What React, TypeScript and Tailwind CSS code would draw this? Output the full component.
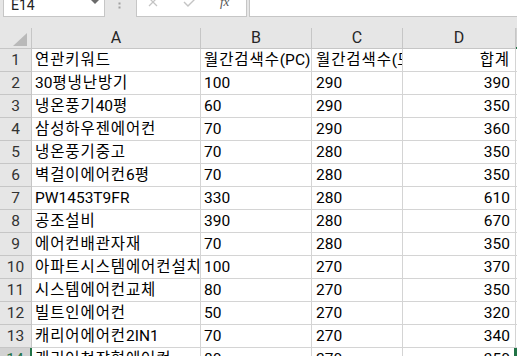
import React from "react";

const rows: [string, string, string, string, string][] = [
  ["1", "연관키워드", "월간검색수(PC)", "월간검색수(모바일)", "합계"],
  ["2", "30평냉난방기", "100", "290", "390"],
  ["3", "냉온풍기40평", "60", "290", "350"],
  ["4", "삼성하우젠에어컨", "70", "290", "360"],
  ["5", "냉온풍기중고", "70", "280", "350"],
  ["6", "벽걸이에어컨6평", "70", "280", "350"],
  ["7", "PW1453T9FR", "330", "280", "610"],
  ["8", "공조설비", "390", "280", "670"],
  ["9", "에어컨배관자재", "70", "280", "350"],
  ["10", "아파트시스템에어컨설치", "100", "270", "370"],
  ["11", "시스템에어컨교체", "80", "270", "350"],
  ["12", "빌트인에어컨", "50", "270", "320"],
  ["13", "캐리어에어컨2IN1", "70", "270", "340"],
  ["14", "캐리어천장형에어컨", "80", "270", "350"],
];

// hangul in the reference font runs a bit wider than the fallback, so space it out
function Txt({ s }: { s: string }) {
  const parts = s.split(/([\uAC00-\uD7A3]+)/).filter(Boolean);
  return (
    <>
      {parts.map((p, i) =>
        /[\uAC00-\uD7A3]/.test(p) ? (
          <span key={i} className="tracking-[0.9px]">
            {p}
          </span>
        ) : (
          <span key={i}>{p}</span>
        )
      )}
    </>
  );
}

function Toolbar() {
  return (
    <div className="flex h-[28px] items-start bg-[#e6e6e6]">
      {/* name box */}
      <div className="ml-[3px] flex h-[17px] w-[102px] items-start justify-between overflow-hidden border-x border-b border-[#c6c6c6] bg-white">
        <span className="-mt-[3px] pl-[7px] text-[14px] leading-[16px] text-[#222]">E14</span>
        <svg className="mr-[5px]" width="8" height="4" viewBox="0 0 8 4">
          <polygon points="0,0 8,0 4,4" fill="#6b6b6b" />
        </svg>
      </div>
      <svg className="ml-[13px]" width="3" height="10" viewBox="0 0 3 10">
        <rect x="0.5" y="2.5" width="2" height="2" fill="#a0a0a0" />
        <rect x="0.5" y="6.5" width="2" height="2" fill="#a0a0a0" />
      </svg>
      {/* cancel / enter / fx */}
      <div className="ml-[15px] flex h-[17px] w-[111px] items-start overflow-hidden border-x border-b border-[#c6c6c6] bg-white">
        <svg className="-mt-[3px] ml-[11px]" width="10" height="10" viewBox="0 0 10 10">
          <path d="M1 1 L9 9 M9 1 L1 9" stroke="#c4c4c4" strokeWidth="1.3" fill="none" />
        </svg>
        <svg className="-mt-[3px] ml-[25px]" width="14" height="10" viewBox="0 0 14 10">
          <path d="M1 5 L5 9 L13 1" stroke="#c4c4c4" strokeWidth="1.4" fill="none" />
        </svg>
        <span className="-mt-[6px] ml-[23px] font-['Liberation_Serif'] text-[13px] italic leading-[16px] text-[#555]">
          fx
        </span>
      </div>
      <div className="ml-[2px] h-[17px] flex-1 border-b border-l border-[#c6c6c6] bg-white" />
    </div>
  );
}

function HeaderRow() {
  const cols: [string, string][] = [
    ["A", "w-[169px]"],
    ["B", "w-[111px]"],
    ["C", "w-[91px]"],
    ["D", "w-[113px]"],
  ];
  return (
    <div className="flex h-[21px] bg-[#e6e6e6] text-[16px] leading-[20px] text-[#262626]">
      <div className="relative w-[32px] shrink-0 border-b border-r border-[#c6c6c6]">
        <svg className="absolute left-0 top-0" width="31" height="20" viewBox="0 0 31 20">
          <polygon points="27,5 27,18 13,18" fill="#b9b9b9" />
        </svg>
      </div>
      {cols.map(([l, w]) => (
        <div key={l} className={`${w} shrink-0 border-b border-r border-[#c6c6c6] text-center`}>
          {l}
        </div>
      ))}
      <div className="flex-1 border-b-2 border-[#217346] bg-[#d2d2d2]" />
    </div>
  );
}

function DataRow({ r }: { r: [string, string, string, string, string] }) {
  const sel = r[0] === "14";
  return (
    <div className="flex h-[23px] shrink-0 text-[15.5px] leading-[22px]">
      <div
        className={
          sel
            ? "w-[32px] shrink-0 border-b border-r-2 border-b-[#c6c6c6] border-r-[#217346] bg-[#d2d2d2] text-center text-[#217346]"
            : "w-[32px] shrink-0 border-b border-r border-[#c6c6c6] bg-[#e6e6e6] text-center text-[#333]"
        }
      >
        {r[0]}
      </div>
      <div className="w-[169px] shrink-0 overflow-hidden whitespace-nowrap border-b border-r border-[#d4d4d4] pl-[3px] text-black">
        <Txt s={r[1]} />
      </div>
      <div className="w-[111px] shrink-0 overflow-hidden whitespace-nowrap border-b border-r border-[#d4d4d4] pl-[3px] text-black">
        <Txt s={r[2]} />
      </div>
      <div className="w-[91px] shrink-0 overflow-hidden whitespace-nowrap border-b border-r border-[#d4d4d4] pl-[4px] text-black">
        <Txt s={r[3]} />
      </div>
      <div className="w-[113px] shrink-0 overflow-hidden whitespace-nowrap border-b border-r border-[#d4d4d4] pr-[5px] text-right text-black">
        <Txt s={r[4]} />
      </div>
      <div className="flex-1 border-b border-[#d4d4d4]" />
    </div>
  );
}

export default function App() {
  return (
    <div className="relative h-[356px] w-[517px] overflow-hidden bg-white font-['Roboto','Noto_Sans_CJK_KR',sans-serif]">
      <Toolbar />
      <HeaderRow />
      <div className="flex flex-col">
        {rows.map((r) => (
          <DataRow key={r[0]} r={r} />
        ))}
      </div>
      {/* active cell E14 selection edge */}
      <div className="absolute left-[514px] top-[348px] h-[10px] w-[3px] bg-[#217346]" />
    </div>
  );
}
